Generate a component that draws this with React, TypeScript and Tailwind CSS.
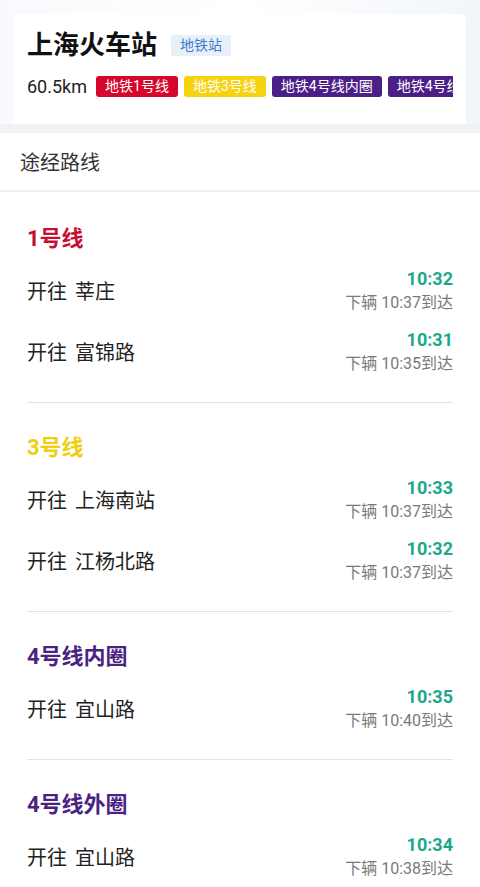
import React from 'react';

type Train = { dest: string; time: string; next: string };
type Line = { name: string; color: string; trains: Train[] };

const tags = [
  { label: '地铁1号线', bg: 'bg-[#d7062b]' },
  { label: '地铁3号线', bg: 'bg-[#f6d30f]' },
  { label: '地铁4号线内圈', bg: 'bg-[#4b1f86]' },
  { label: '地铁4号线外圈', bg: 'bg-[#4b1f86]' },
];

const lines: Line[] = [
  {
    name: '1号线',
    color: 'text-[#c70f35]',
    trains: [
      { dest: '莘庄', time: '10:32', next: '10:37' },
      { dest: '富锦路', time: '10:31', next: '10:35' },
    ],
  },
  {
    name: '3号线',
    color: 'text-[#f0cf10]',
    trains: [
      { dest: '上海南站', time: '10:33', next: '10:37' },
      { dest: '江杨北路', time: '10:32', next: '10:37' },
    ],
  },
  {
    name: '4号线内圈',
    color: 'text-[#4a2282]',
    trains: [{ dest: '宜山路', time: '10:35', next: '10:40' }],
  },
  {
    name: '4号线外圈',
    color: 'text-[#4a2282]',
    trains: [{ dest: '宜山路', time: '10:34', next: '10:38' }],
  },
];

const font = { fontFamily: 'Roboto, "Noto Sans CJK SC", sans-serif' };

const App = () => {
  return (
    <div className="w-[480px] h-[887px] overflow-hidden bg-white" style={font}>
      {/* station header */}
      <div className="bg-gradient-to-r from-[#f8fafd] via-white to-[#f2f6fb] px-[14px] pt-[14px]">
        <div className="bg-white rounded-t-md px-[13px] pt-[14px] pb-[27px]">
          <div className="flex items-center">
            <h1 className="text-[26px] leading-[34px] font-bold text-[#111]">上海火车站</h1>
            <span className="ml-[14px] bg-[#e7eff9] text-[#3b7dc9] text-[14px] leading-[21px] px-[9px] rounded-[2px]">
              地铁站
            </span>
          </div>
          <div className="flex items-center mt-[14px] w-[426px] overflow-hidden whitespace-nowrap">
            <span className="text-[18px] leading-[21px] text-[#222] mr-[9px] shrink-0">60.5km</span>
            {tags.map((t) => (
              <span
                key={t.label}
                className={`${t.bg} text-white text-[14px] leading-[21px] px-[9px] rounded-[3px] mr-[6px] shrink-0`}
              >
                {t.label}
              </span>
            ))}
          </div>
        </div>
      </div>

      <div className="h-[9px] bg-[#f2f2f2]" />

      <div className="h-[59px] flex items-center px-[20px] pt-[3px] border-b-2 border-[#f0f0f0]">
        <span className="text-[20px] text-[#333]">途经路线</span>
      </div>

      <div className="px-[27px]">
        {lines.map((line, i) => (
          <div
            key={line.name}
            className={`${i === 0 ? 'pt-[32px]' : 'pt-[30px]'} pb-[20px] border-b border-[#e3e3e3]`}
          >
            <h2 className={`${line.color} text-[22px] leading-[30px] font-bold mb-[6px]`}>{line.name}</h2>
            {line.trains.map((t) => (
              <div key={t.dest} className="h-[61px] flex items-center justify-between">
                <span className="text-[20px] text-[#222] mt-[2px]">
                  <span className="mr-[8px]">开往</span>
                  {t.dest}
                </span>
                <div className="text-right">
                  <div className="text-[18px] leading-[22px] font-bold text-[#1ba88a]">{t.time}</div>
                  <div className="text-[16px] leading-[21px] mt-[2px] text-[#7a7a7a]">下辆 {t.next}到达</div>
                </div>
              </div>
            ))}
          </div>
        ))}
      </div>
    </div>
  );
};

export default App;
